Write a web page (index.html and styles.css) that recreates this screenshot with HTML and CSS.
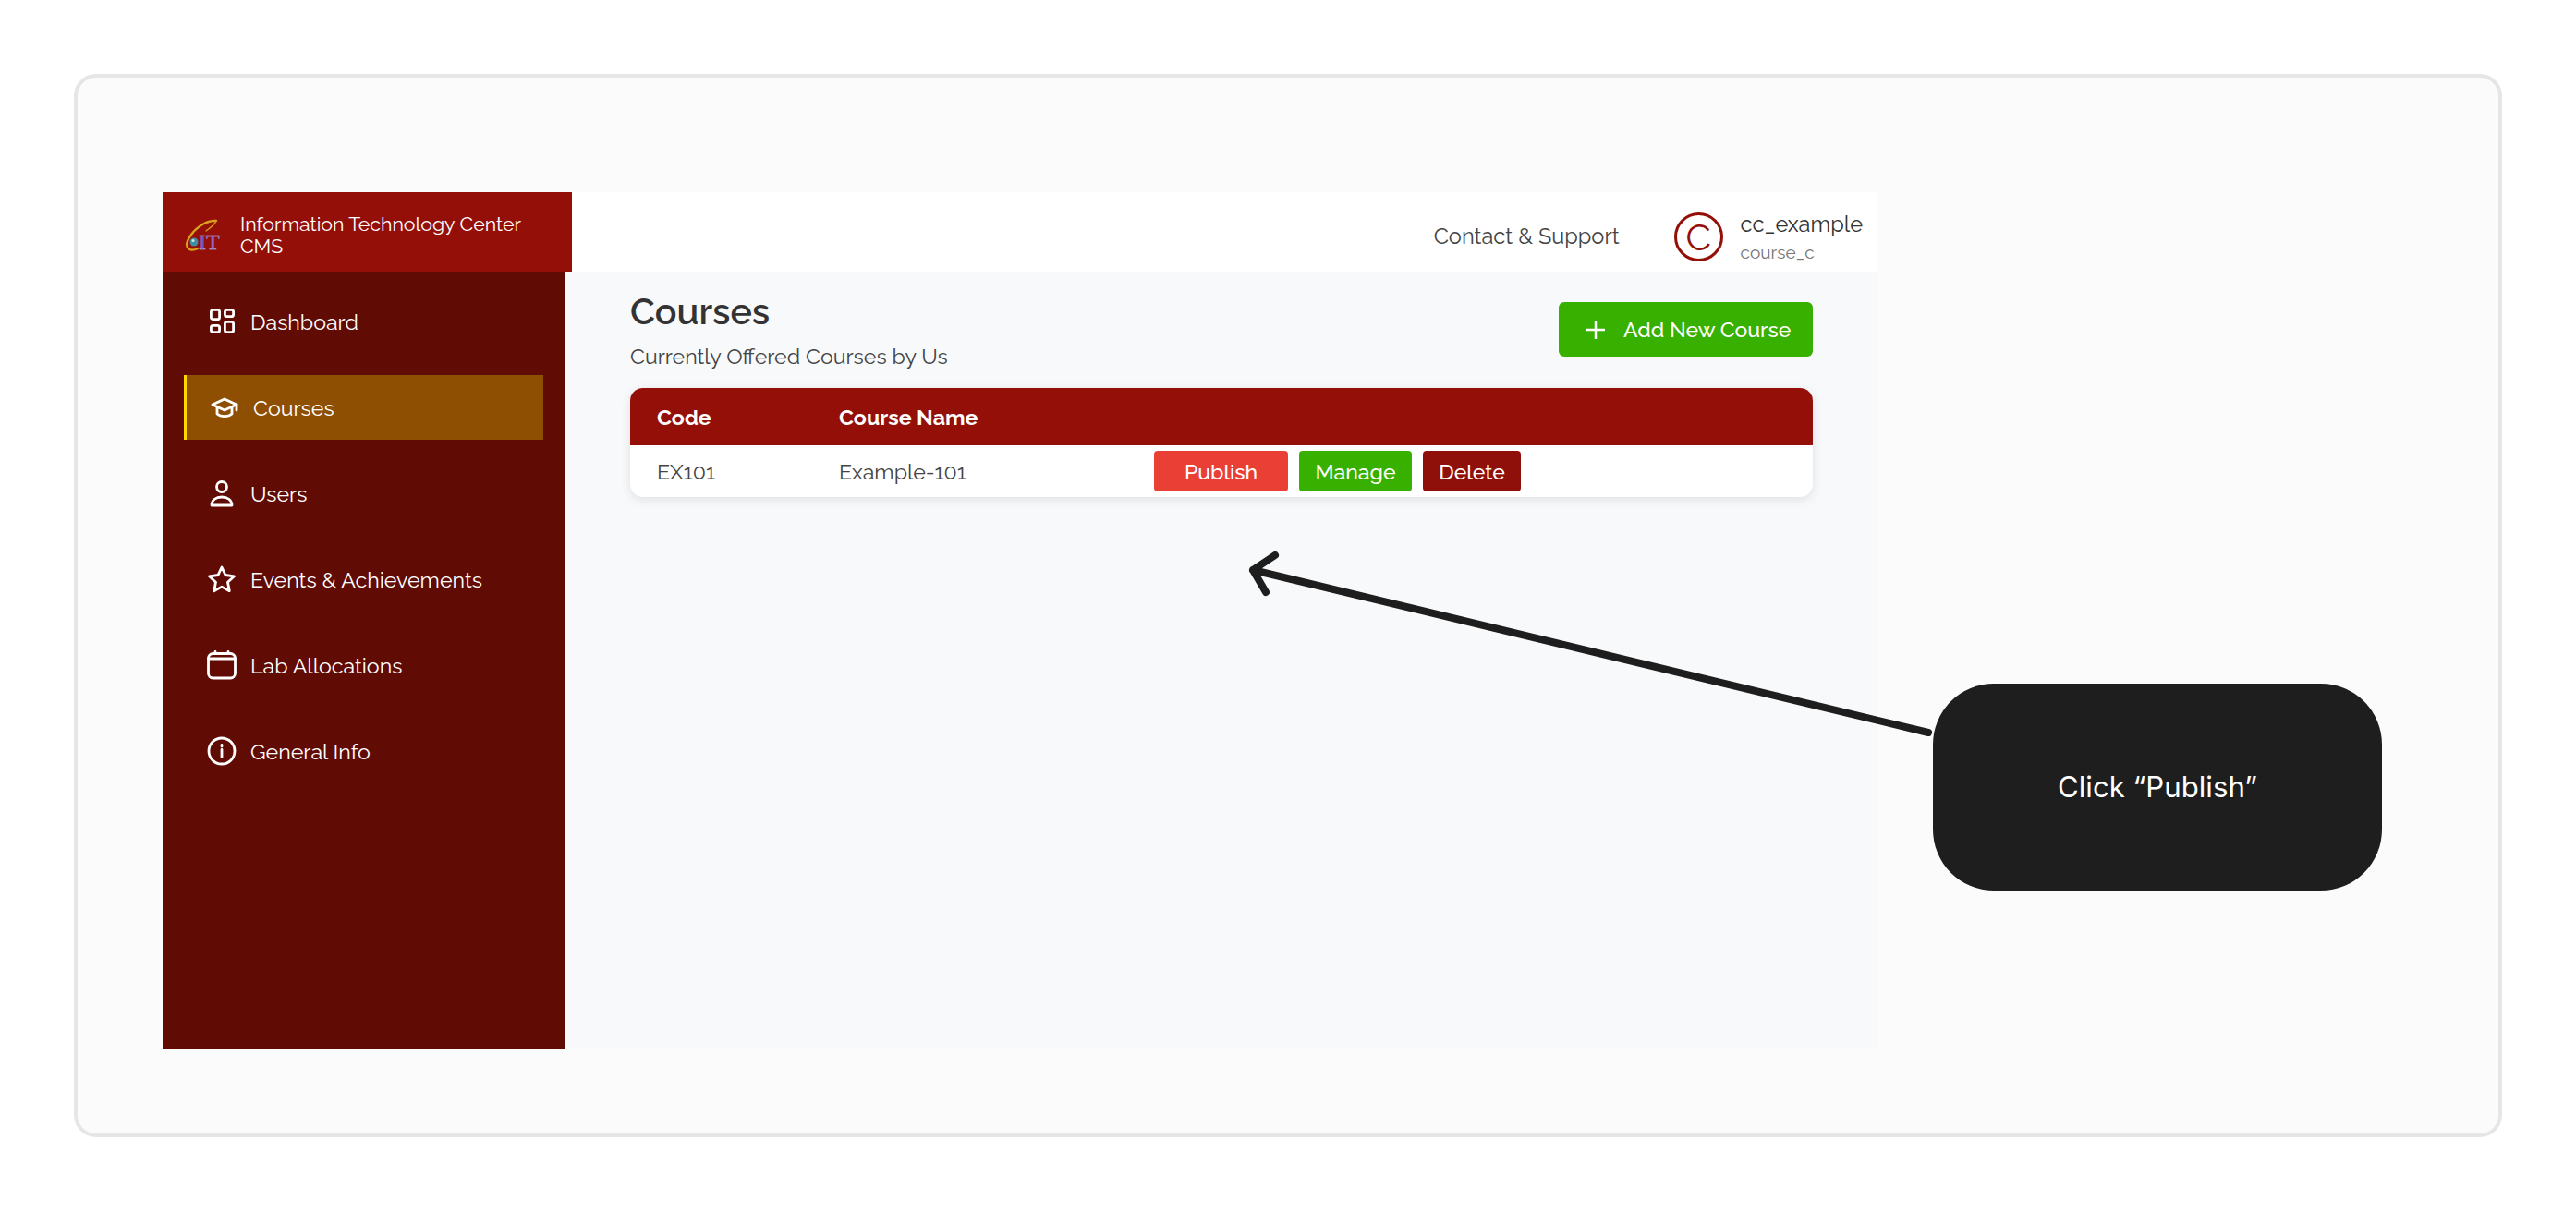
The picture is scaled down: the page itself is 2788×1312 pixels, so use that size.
FILE: index.html
```html
<!DOCTYPE html>
<html lang="en">
<head>
    <meta charset="UTF-8">
    <title>Click Publish</title>
    <link rel="stylesheet" href="styles.css">
</head>
<body>
    <div class="frame">
        <div class="app">
            <aside class="side">
                <div class="brand">
                    <svg class="logo" viewBox="0 0 40 48">
                        <g transform="translate(0 4)">
                            <path class="swoosh" d="M34 4C22 3 8 14 3 26c-3 8 3 12 11 8"/>
                            <path class="swoosh-thin" d="M34 4C33 8 28 11 23 15"/>
                            <circle cx="10" cy="27" r="4.500" fill="#3c8fa0"/>
                            <circle cx="9" cy="25.500" r="1.500" fill="#cfe6e2"/>
                            <text class="logo-text" x="15" y="35">IT</text>
                        </g>
                    </svg>
                    <span>Information Technology Center CMS</span>
                </div>
                <nav class="nav">
                    <a class="nav-item"><svg viewBox="0 0 32 32"><rect x="4.400" y="3.400" width="9.200" height="10.200" rx="2.200"/><rect x="19.400" y="3.400" width="9.200" height="7.200" rx="2.200"/><rect x="19.400" y="16.400" width="9.200" height="11.200" rx="2.200"/><rect x="4.400" y="20.400" width="9.200" height="7.200" rx="2.200"/></svg>Dashboard</a>
                    <a class="nav-item active"><svg viewBox="0 0 32 32"><path d="M3 13 16 7l13 6-13 6z"/><path d="M8 16v7c4 3.500 12 3.500 16 0v-7M29 13v6"/></svg>Courses</a>
                    <a class="nav-item"><svg viewBox="0 0 32 32"><circle cx="16" cy="9" r="5.500"/><path d="M5 29c0-6 5-9 11-9s11 3 11 9z"/></svg>Users</a>
                    <a class="nav-item"><svg viewBox="0 0 32 32"><path d="m16 3 4 8.500 9.500 1.300-7 6.500 1.800 9.400-8.300-4.600-8.300 4.600 1.800-9.400-7-6.500 9.500-1.300z"/></svg>Events &amp; Achievements</a>
                    <a class="nav-item"><svg viewBox="0 0 32 32"><rect x="1.500" y="3.500" width="29" height="26.500" rx="5"/><path d="M1.500 9h29M9 1.500v2M23 1.500v2"/></svg>Lab Allocations</a>
                    <a class="nav-item"><svg viewBox="0 0 32 32"><circle cx="16" cy="16" r="14"/><path d="M16 14.500v8M16 9.500v1.500"/></svg>General Info</a>
                </nav>
            </aside>
            <div class="main">
                <header class="top">
                    <span class="contact">Contact &amp; Support</span>
                    <div class="avatar">C</div>
                    <div class="who">
                        <div class="who-name">cc_example</div>
                        <div class="who-role">course_c</div>
                    </div>
                </header>
                <section class="content">
                    <div class="head">
                        <div>
                            <h1>Courses</h1>
                            <p>Currently Offered Courses by Us</p>
                        </div>
                        <button class="add"><svg viewBox="0 0 20 20"><path d="M10 0v20M0 10h20"/></svg>Add New Course</button>
                    </div>
                    <div class="card">
                        <div class="row row-head">
                            <div class="col-code">Code</div>
                            <div>Course Name</div>
                        </div>
                        <div class="row row-body">
                            <div class="col-code">EX101</div>
                            <div class="col-name">Example-101</div>
                            <div class="actions">
                                <button class="btn publish">Publish</button>
                                <button class="btn manage">Manage</button>
                                <button class="btn delete">Delete</button>
                            </div>
                        </div>
                    </div>
                </section>
            </div>
        </div>
        <svg class="arrow" viewBox="0 0 2788 1312"><path d="M2087 793 1356 617M1380 601 1356 617 1370 641"/></svg>
        <div class="callout">Click “Publish”</div>
    </div>
</body>
</html>
```

FILE: styles.css
```css
* {
    box-sizing: border-box;
}

body {
    margin: 0;
    background: #fff;
    font-family: "Raleway", "Lato", "Open Sans", sans-serif;
}

.frame {
    position: relative;
    width: 2628px;
    height: 1151px;
    margin: 80px 0 0 80px;
    padding: 124px 0 0 92px;
    background: #fbfbfb;
    border: 4px solid #e6e6e6;
    border-radius: 24px;
}

.app {
    display: flex;
    width: 1856px;
    height: 928px;
}

.side {
    position: relative;
    z-index: 1;
    width: 436px;
    flex: none;
    background: #600b04;
}

.brand {
    display: flex;
    align-items: center;
    gap: 20px;
    width: 443px;
    height: 86px;
    padding: 8px 30px 0 24px;
    background: #940f08;
    color: #fff;
    font-size: 21.300px;
    line-height: 24px;
}

.logo {
    width: 40px;
    height: 48px;
    flex: none;
    overflow: visible;
}

.swoosh,
.swoosh-thin {
    fill: none;
    stroke: #d9a11c;
    stroke-width: 2.400;
    stroke-linecap: round;
}

.swoosh-thin {
    stroke-width: 1.200;
}

.logo-text {
    font: 400 24px "Liberation Serif", serif;
    fill: #5a4fc4;
    stroke: #c9c4ee;
    stroke-width: 0.300px;
}

.nav {
    padding-top: 19px;
}

.nav-item {
    display: flex;
    align-items: center;
    gap: 15px;
    width: 389px;
    height: 70px;
    margin: 0 0 23px 23px;
    padding-left: 25px;
    color: #fff;
    font-size: 23.200px;
}

.nav-item svg {
    width: 32px;
    height: 32px;
    flex: none;
    fill: none;
    stroke: #fff;
    stroke-width: 2.800;
    stroke-linejoin: round;
    stroke-linecap: round;
}

.active {
    background: #8f4f03;
    border-left: 3px solid #ffd700;
}

.main {
    flex: 1;
    display: flex;
    flex-direction: column;
}

.top {
    display: flex;
    align-items: center;
    height: 86px;
    padding: 10px 16px 0 0;
    background: #fff;
    color: #444;
}

.contact {
    margin-left: auto;
    margin-right: 59px;
    font-size: 23.600px;
}

.avatar {
    display: flex;
    align-items: center;
    justify-content: center;
    width: 53px;
    height: 53px;
    margin-right: 19px;
    border: 3px solid #940f08;
    border-radius: 50%;
    color: #940f08;
    font-size: 40px;
}

.who-name {
    font-size: 23.600px;
    color: #333;
}

.who-role {
    margin-top: 5px;
    font-size: 19px;
    color: #777;
}

.content {
    flex: 1;
    padding: 20px 70px 0;
    background: #f8f9fb;
}

.head {
    display: flex;
    justify-content: space-between;
    align-items: center;
}

h1 {
    margin: 0 0 12px;
    font-size: 39.300px;
    font-weight: 600;
    color: #333;
}

.head p {
    margin: 0;
    font-size: 23.200px;
    color: #444;
}

.add {
    display: flex;
    align-items: center;
    gap: 20px;
    width: 275px;
    height: 59px;
    padding: 0 0 0 30px;
    background: #38b000;
    border: 0;
    border-radius: 6px;
    color: #fff;
    font: 500 23px "Raleway", "Lato", sans-serif;
}

.add svg {
    width: 20px;
    height: 20px;
    flex: none;
    fill: none;
    stroke: #fff;
    stroke-width: 2.500;
}

.card {
    margin-top: 21px;
    background: #fff;
    border-radius: 14px;
    overflow: hidden;
    box-shadow: 0 3px 12px rgba(0, 0, 0, 0.1);
    font-size: 23.200px;
}

.row {
    display: flex;
    align-items: center;
    padding-left: 29px;
}

.row-head {
    height: 62px;
    background: #940f08;
    color: #fff;
    font-weight: 700;
}

.row-body {
    height: 56px;
    color: #444;
}

.col-code {
    width: 197px;
}

.col-name {
    width: 341px;
}

.actions {
    display: flex;
    gap: 12px;
}

.btn {
    height: 44px;
    padding: 0;
    border: 0;
    border-radius: 4px;
    color: #fff;
    font: 500 23px "Raleway", "Lato", sans-serif;
}

.publish {
    width: 145px;
    background: #ea3f35;
}

.manage {
    width: 122px;
    background: #38b000;
}

.delete {
    width: 106px;
    background: #8f0f0a;
}

.arrow {
    position: absolute;
    z-index: 2;
    left: -84px;
    top: -84px;
    width: 2788px;
    height: 1312px;
    fill: none;
    stroke: #1e1e1e;
    stroke-width: 8;
    stroke-linecap: round;
    stroke-linejoin: round;
}

.callout {
    position: absolute;
    left: 2008px;
    top: 656px;
    display: flex;
    align-items: center;
    justify-content: center;
    width: 486px;
    height: 224px;
    background: #1e1e1e;
    border-radius: 66px;
    color: #fff;
    font: 400 31.200px "Inter", sans-serif;
}
```
